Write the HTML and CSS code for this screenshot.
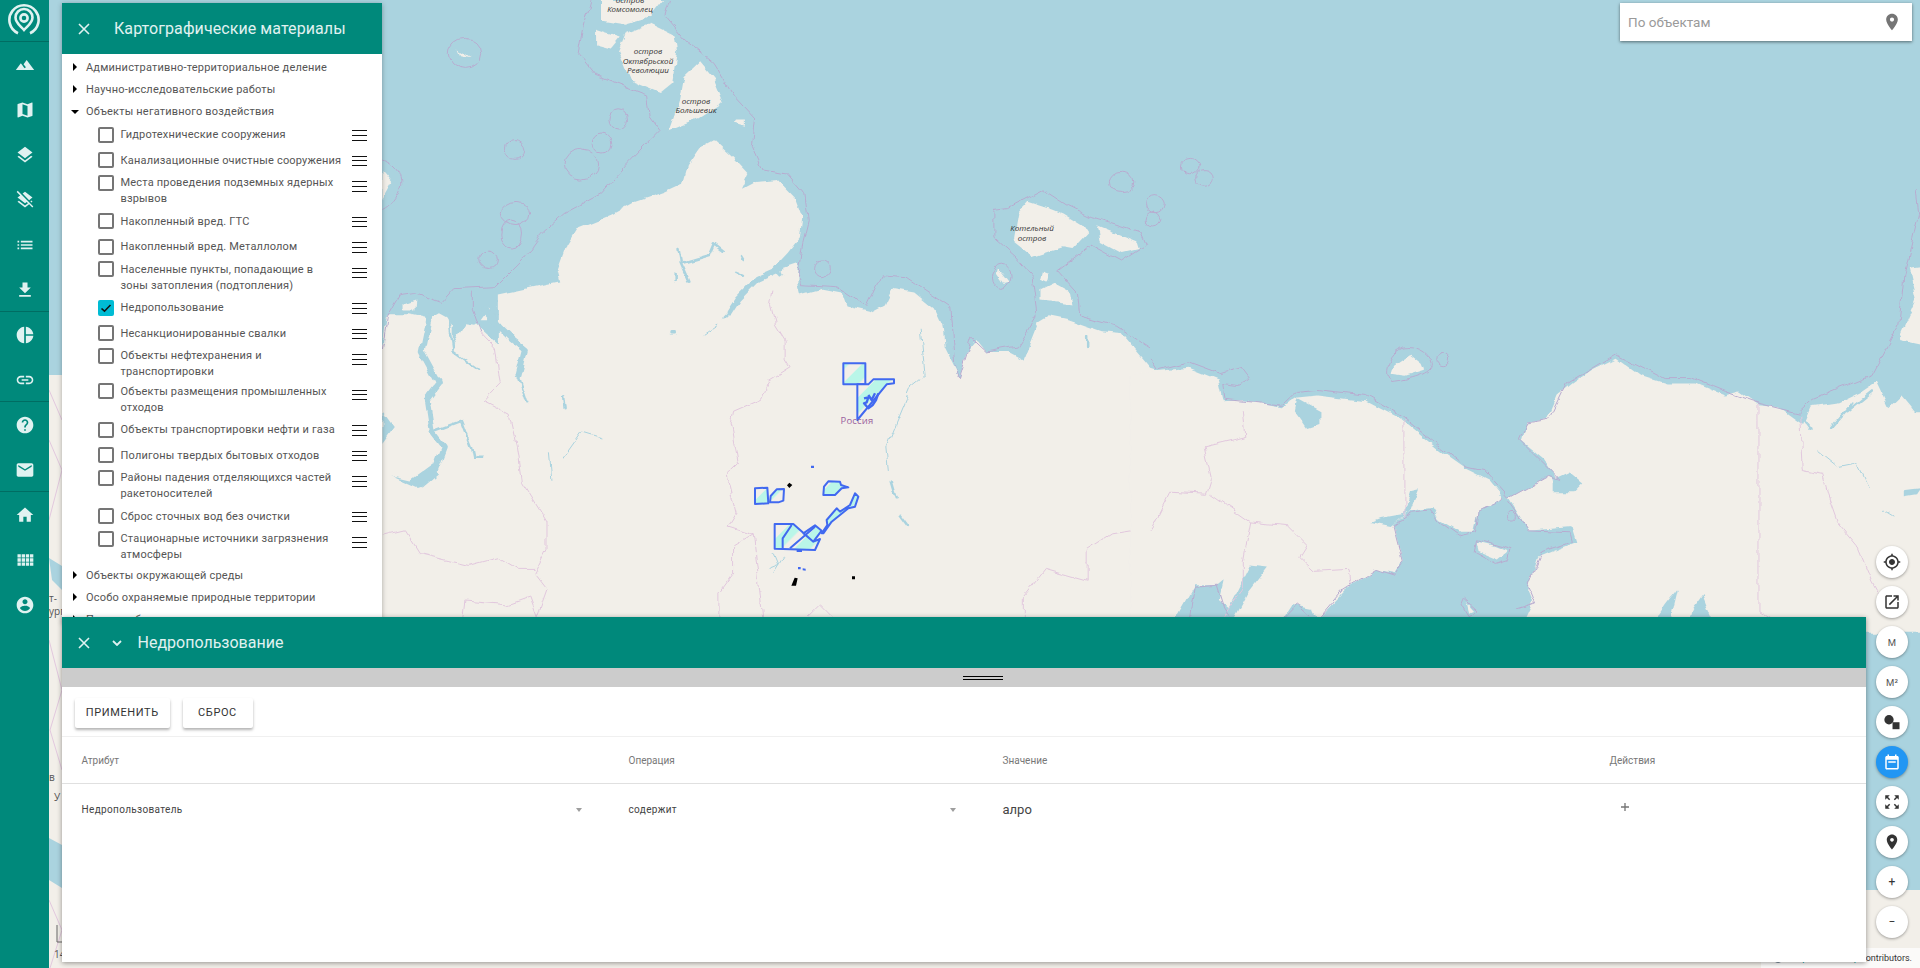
FILE: index.html
```html
<!DOCTYPE html>
<html lang="ru">
<head>
<meta charset="utf-8">
<title>Картографические материалы</title>
<link rel="stylesheet" href="styles.css">
</head>
<body>
<div class="app">
  <svg class="map" width="1920" height="968" viewBox="0 0 1920 968" xmlns="http://www.w3.org/2000/svg">
    <defs>
      <pattern id="zone" patternUnits="userSpaceOnUse" width="62" height="62" patternTransform="rotate(-45)">
        <rect width="62" height="62" fill="#f2efe9"/>
        <rect width="62" height="34" fill="#b9f6e8"/>
      </pattern>
      <filter id="rough" filterUnits="userSpaceOnUse" x="-60" y="-60" width="1720" height="1720">
        <feTurbulence type="fractalNoise" baseFrequency="0.028" numOctaves="3" seed="4" result="n"/>
        <feDisplacementMap in="SourceGraphic" in2="n" scale="16" xChannelSelector="R" yChannelSelector="G"/>
      </filter>
    </defs>
    <rect class="water" x="0" y="0" width="1920" height="968"/>
    <rect class="land" x="40" y="375" width="345" height="593"/>
    <path class="gulf" d="M49 558 L62 566 L62 590 L52 580 Z"/>
    <path class="gulf" d="M49 838 L62 845 L62 888 L49 880 Z"/>
    <rect class="land" x="0" y="890" width="1920" height="78"/>
    <path class="admin" d="M49 390 L62 420 M49 440 L62 470 L49 520 M49 640 L62 690 L50 730 L62 770 M49 900 L62 930 L50 968"/>
    <g class="rough" transform="translate(380 0) scale(0.4911 0.3954)">
      <path class="land" d="M0 1568 L0 900 L12 800 L20 795 L60 795 L98 805 L120 790 L135 800 L150 825 L150 870 L175 820 L200 825 L240 870 L240 745 L340 718 L365 712 L360 690 L380 620 L400 580 L470 545 L520 510 L580 485 L615 465 L625 420 L650 375 L680 355 L720 400 L750 440 L735 480 L765 460 L810 455 L845 500 L860 550 L855 600 L830 640 L800 680 L815 700 L850 670 L850 720 L855 745 L900 730 L940 740 L950 775 L1000 790 L1030 770 L1045 730 L1090 740 L1130 780 L1145 820 L1150 880 L1170 930 L1180 955 L1195 890 L1215 860 L1235 890 L1280 890 L1310 910 L1340 815 L1360 800 L1400 810 L1470 840 L1510 845 L1568 930 L1610 945 L1610 1568 Z"/>
      <path class="land" d="M450 0 L580 0 L555 40 L500 60 L450 50 Z"/>
      <path class="land" d="M440 75 L490 95 L470 125 L440 115 Z"/>
      <path class="land" d="M500 85 L550 60 L600 90 L605 130 L595 210 L570 235 L510 205 L485 130 Z"/>
      <path class="land" d="M650 155 L680 200 L700 260 L650 300 L590 330 L610 260 L620 190 Z"/>
      <path class="land" d="M725 305 L745 305 L745 318 L722 310 Z"/>
      <path class="land" d="M160 125 L185 145 L165 140 Z"/>
      <path class="land" d="M5 430 L25 460 L5 505 Z"/>
      <path class="land" d="M1320 510 L1370 530 L1390 540 L1430 570 L1440 590 L1410 630 L1390 625 L1330 650 L1290 610 L1300 540 Z"/>
      <path class="land" d="M1460 570 L1540 610 L1545 630 L1510 640 L1465 610 Z"/>
      <path class="land" d="M1345 730 L1370 715 L1405 740 L1410 770 L1345 760 Z"/>
      <path class="land" d="M1350 685 L1362 690 L1358 712 L1346 705 Z"/>
      <path class="land" d="M1258 680 L1280 715 L1272 718 L1256 690 Z"/>
      <path class="land" d="M48 770 L72 760 L70 785 L48 785 Z"/>
      <path class="land" d="M205 810 L222 780 L220 810 Z"/>
      <path class="land" d="M172 845 L198 820 L200 840 Z"/>
      <path class="land" d="M815 680 L850 665 L848 700 L820 695 Z"/>
      <path class="river thick" d="M100 800 L85 890 L120 970 L95 1010 L105 1090 L130 1130 L110 1195 L80 1230"/>
      <path class="river mid" d="M110 1090 L165 1065 L185 1130 L190 1160 L210 1160"/>
      <path class="river mid" d="M140 800 L150 890 L200 935"/>
      <path class="river thick" d="M210 780 L245 830 L270 860 L295 885 L282 950"/>
      <path class="river mid" d="M282 950 L300 1020"/>
      <path class="gulf" d="M5 1040 L28 1080 L5 1120 Z"/>
      <path class="gulf" d="M25 1205 L60 1215 L110 1170 L120 1200 L85 1238 Z"/>
      <path class="river mid" d="M610 630 L615 665 L670 645 L680 615 L700 635"/>
      <path class="river mid" d="M612 665 L630 715"/>
      <path class="river mid" d="M600 690 L600 708"/>
      <path class="river mid" d="M735 650 L740 660"/>
      <path class="river mid" d="M725 690 L735 695"/>
      <path class="river thick" d="M815 680 L770 705 L730 755 L712 790"/>
      <path class="river mid" d="M712 790 L700 805"/>
      <path class="river mid" d="M592 843 L600 843"/>
      <path class="river mid" d="M375 1002 L378 1035"/>
      <path class="river fine" d="M345 1150 L350 1215 M370 1160 L410 1090 L450 1105 M660 845 L690 820"/>
      <path class="river fine" d="M1100 830 L1110 950 L1080 980 L1050 1070 L1030 1130 L1035 1190"/>
      <path class="river mid" d="M1040 1218 L1050 1260"/>
      <path class="river mid" d="M1058 1302 L1075 1330"/>
      <path class="river fine" d="M800 1400 L810 1430 L790 1440 M820 1410 L800 1450"/>
      <path class="river mid" d="M1440 850 L1440 880"/>
      <path class="admin" d="M800 735 L795 770 L805 820 L825 860 L825 910 L835 930 L790 965 L775 1010 L720 1040 L715 1070 L730 1170 L705 1200 L725 1300 L710 1330 L760 1350 L720 1380 L720 1450 L690 1500 L690 1560"/>
      <path class="admin" d="M205 840 L235 880 L245 970 L210 1015 L265 1050 L280 1130 L290 1220 L340 1320 L340 1390 L315 1450 L340 1490 L320 1560"/>
      <path class="admin" d="M0 1355 L50 1340 L80 1400 L180 1430 L240 1410 L280 1440 L315 1440"/>
      <path class="admin" d="M170 1568 L175 1520 L260 1530 L305 1510 L320 1560"/>
      <path class="admin" d="M760 1350 L780 1568 M870 1560 L895 1530 L925 1568"/>
      <path class="admin" d="M1568 1335 L1490 1350 L1440 1390 L1440 1470 L1355 1440 L1310 1510 L1310 1568"/>
      <path class="sea" d="M430 0 L415 70 L405 135 L440 190 L545 240 L550 295 L570 330 L500 420 L450 490 L375 540 L330 590 L295 650 L235 725 L150 730 L125 765 L70 740 L40 745 L15 800 L5 880"/>
      <path class="sea" d="M590 0 L580 40 L620 100 L680 160 L720 240 L765 300 L758 370 L780 430 L830 440 L865 490 L872 560 L860 620 L850 700 L860 720 L930 725 L990 775 L1020 695 L1070 700 L1160 775 L1170 920 L1180 955 L1205 855 L1235 890 L1300 875 L1340 795 L1330 700 L1295 650 L1250 600 L1250 530 L1280 525 L1350 480 L1400 520 L1450 550 L1550 590 L1560 620 L1510 660 L1450 620 L1380 685 L1420 740 L1425 800 L1500 825 L1568 880"/>
      <path class="sea" d="M188 735 L188 780 L205 840"/>
      <path class="sea" d="M5 405 C30 415 45 440 42 470 C38 500 20 520 5 530"/>
      <ellipse class="sea" cx="172" cy="135" rx="33" ry="38"/>
      <ellipse class="sea" cx="275" cy="378" rx="20" ry="25"/>
      <ellipse class="sea" cx="485" cy="302" rx="19" ry="27"/>
      <ellipse class="sea" cx="452" cy="363" rx="18" ry="24"/>
      <ellipse class="sea" cx="410" cy="415" rx="33" ry="38"/>
      <ellipse class="sea" cx="275" cy="540" rx="30" ry="28"/>
      <ellipse class="sea" cx="267" cy="592" rx="21" ry="38"/>
      <ellipse class="sea" cx="220" cy="657" rx="17" ry="22"/>
      <ellipse class="sea" cx="900" cy="680" rx="15" ry="20"/>
      <ellipse class="sea" cx="1510" cy="460" rx="25" ry="27"/>
      <ellipse class="sea" cx="1265" cy="700" rx="18" ry="32"/>
    </g>
    <g class="rough" transform="translate(1150 0) scale(0.4911 0.3954)">
      <path class="land" d="M-40 950 L0 940 L80 930 L140 960 L150 1015 L190 1012 L270 1030 L300 1005 L340 1000 L440 1015 L510 1060 L600 1150 L640 1185 L690 1215 L720 1260 L705 1268 L670 1290 L660 1345 L630 1345 L590 1315 L575 1285 L530 1292 L495 1325 L515 1420 L500 1450 L460 1440 L400 1490 L340 1568 L-40 1568 Z"/>
      <path class="land" d="M730 1260 L810 1205 L835 1225 L800 1160 L755 1115 L765 1070 L810 1060 L830 1000 L860 970 L900 935 L950 905 L1000 950 L1050 970 L1110 970 L1170 1000 L1200 990 L1240 1025 L1280 1030 L1330 1075 L1345 1030 L1400 1020 L1450 990 L1480 965 L1505 1030 L1530 1000 L1560 1045 L1600 1045 L1600 1600 L750 1600 L780 1520 L770 1490 L790 1410 L830 1390 L870 1370 L860 1330 L770 1340 L750 1300 Z"/>
      <path class="land" d="M1545 680 L1600 670 L1600 880 L1525 860 L1560 760 Z"/>
      <path class="land" d="M495 925 L530 895 L555 920 L560 935 L520 950 L490 945 Z"/>
      <path class="land" d="M665 1370 L700 1380 L730 1395 L710 1415 L670 1395 Z"/>
      <path class="land" d="M645 1525 L660 1545 L650 1550 Z"/>
      <path class="gulf" d="M300 1010 L345 1040 L345 1075 L320 1085 L295 1040 Z"/>
      <path class="gulf" d="M530 1240 L548 1235 L530 1290 L490 1330 L450 1320 L470 1310 L515 1300 Z"/>
      <path class="gulf" d="M90 1480 L135 1480 L150 1465 L140 1520 L160 1540 L205 1430 L240 1435 L200 1500 L170 1568 L50 1568 Z"/>
      <path class="gulf" d="M270 1568 L290 1530 L330 1540 L340 1568 Z"/>
      <path class="gulf" d="M820 1215 L855 1195 L880 1220 L860 1245 L820 1245 Z"/>
      <path class="gulf" d="M1050 1530 L1075 1490 L1060 1568 L1030 1568 Z"/>
      <path class="gulf" d="M1105 1540 L1125 1505 L1145 1568 L1100 1568 Z"/>
      <path class="gulf" d="M1535 1240 L1568 1235 L1560 1250 L1535 1255 Z"/>
      <path class="river mid" d="M1330 1060 L1345 1085 M1385 1085 L1430 1020 M1420 1040 L1470 990"/>
      <path class="river fine" d="M1360 1140 L1400 1180 L1440 1170 L1465 1235 M1495 1290 L1515 1305"/>
      <path class="admin" d="M517 1060 L517 1310"/>
      <path class="admin" d="M1240 1020 L1240 1545 L1270 1568"/>
      <path class="admin" d="M1325 1050 L1330 1190 L1370 1200 L1380 1250 L1400 1320 L1440 1380 L1470 1470 L1510 1560"/>
      <path class="admin" d="M190 1040 L195 1105 L110 1130 L125 1210 L115 1250 L40 1245 L10 1320 L0 1340"/>
      <path class="admin" d="M125 1250 L205 1320 L280 1330 L320 1380 L305 1410 L335 1445 L405 1440 L410 1480"/>
      <path class="admin" d="M205 1320 L190 1420 L190 1490 L150 1560"/>
      <path class="sea" d="M0 905 L15 935 L80 915 L145 945 L185 930 L203 960 L180 975 L150 970 L155 1010 L270 1025 L300 990 L340 985 L440 1000 L510 1050 L640 1180 L680 1190 L730 1260 L810 1205 L835 1215 L750 1110 L765 1070 L815 1060 L850 970 L950 895 L1045 955 L1100 955 L1170 990 L1240 1020 L1320 1045 L1350 1010 L1470 950 L1525 820 L1535 700 L1565 540 L1560 480"/>
      <path class="sea" d="M720 1260 L670 1290 L665 1345 L630 1355 L590 1320 L570 1290 L535 1295 L495 1330 L515 1425 L500 1455 L460 1440 L390 1495 L340 1568"/>
      <path class="sea" d="M730 1270 L770 1340 L855 1345 L860 1370 L800 1395 L770 1480 L785 1525 L745 1540"/>
      <path class="sea" d="M80 1568 L90 1485 L135 1480 L150 1540 L165 1568 M270 1568 L300 1530 L335 1568"/>
      <path class="sea" d="M515 880 C495 890 480 915 482 945 L490 965 C530 960 575 945 575 920 C570 890 540 875 515 880 Z"/>
      <path class="sea" d="M665 1365 L735 1390 L730 1415 L705 1425 L660 1395 Z"/>
      <path class="sea" d="M640 1515 L668 1545 L650 1560 L635 1530 Z"/>
      <ellipse class="sea" cx="82" cy="420" rx="18" ry="22"/>
      <ellipse class="sea" cx="110" cy="450" rx="17" ry="21"/>
      <ellipse class="sea" cx="10" cy="515" rx="19" ry="23"/>
      <ellipse class="sea" cx="5" cy="555" rx="15" ry="19"/>
      <ellipse class="sea" cx="597" cy="908" rx="13" ry="17"/>
      <ellipse class="sea" cx="737" cy="1307" rx="9" ry="11"/>
    </g>
    <g transform="translate(740 340) scale(0.33333)">
      <path class="zone" d="M310 70 L376 70 L376 133 L310 133 Z"/>
      <path class="zone" d="M352 133 L352 240 L440 133 L462 130 L462 118 L400 118 L385 133 Z"/>
      <path class="zone-line" d="M372 175 L385 172 L380 187 L372 190 L385 205 L398 195 L408 180 L415 160 M385 165 L395 180 L405 160"/>
      <path class="zone" d="M45 445 L82 443 L85 490 L45 492 Z"/>
      <path class="zone" d="M92 468 L110 448 L132 447 L130 482 L115 487 L90 487 Z"/>
      <path class="zone" d="M250 465 L252 440 L265 424 L300 425 L303 435 L325 442 L305 445 L285 465 Z"/>
      <path class="zone" d="M245 580 L262 555 L260 540 L290 505 L300 515 L330 495 L345 460 L355 470 L345 500 L325 505 L275 545 L250 580 Z"/>
      <path class="zone" d="M104 552 L160 552 L220 605 L190 580 L225 556 L245 572 L220 605 L240 597 L225 630 L104 626 Z"/>
      <path class="zone-line thin" d="M155 555 L128 595 L128 625 M150 625 L225 560"/>
      <path class="dot" d="M213 377 H222 V384 H213 Z M174 681 L182 681 L182 688 L174 688 Z M188 685 L197 686 L197 692 L188 691 Z M170 628 H186 V636 H170 Z"/>
      <path class="blot" d="M148 428 L157 435 L148 444 L141 436 Z M164 713 L173 715 L168 737 L154 737 Z M336 709 H345 V718 H336 Z"/>
    </g>
    <text class="label-ru" x="857" y="424" text-anchor="middle">Россия</text>
    <text class="label-isle" x="630" y="3" text-anchor="middle">остров</text>
    <text class="label-isle" x="630" y="12" text-anchor="middle">Комсомолец</text>
    <text class="label-isle" x="648" y="54" text-anchor="middle">остров</text>
    <text class="label-isle" x="648" y="64" text-anchor="middle">Октябрьской</text>
    <text class="label-isle" x="648" y="73" text-anchor="middle">Революции</text>
    <text class="label-isle" x="696" y="104" text-anchor="middle">остров</text>
    <text class="label-isle" x="696" y="113" text-anchor="middle">Большевик</text>
    <text class="label-isle" x="1032" y="231" text-anchor="middle">Котельный</text>
    <text class="label-isle" x="1032" y="241" text-anchor="middle">остров</text>
    <text class="label-city" x="49" y="602">т-</text>
    <text class="label-city" x="49" y="615">ург</text>
    <text class="label-city" x="49" y="781">в</text>
    <text class="label-city" x="54" y="801">У</text>
    <text class="label-city" x="54" y="958">14</text>
    <path class="scale" d="M57 925 V942 H62"/>
  </svg>

  <div class="attrib"><i class="globe"></i><span>© <a class="osm">OpenStreetMap</a> contributors.</span></div>

  <div class="layout">
    <nav class="rail">
      <div class="rail-logo">
        <svg class="logo" viewBox="0 0 32 32" width="32" height="32">
          <path d="M10 30.2 A14.6 14.6 0 1 1 22 30.2" class="logo-line"/>
          <path d="M16 27 C12.5 23 7.5 20 7.5 14.5 A8.5 8.5 0 0 1 24.5 14.5 C24.5 20 19.5 23 16 27 Z" class="logo-line"/>
          <circle cx="16" cy="15" r="3.6" class="logo-line"/>
        </svg>
      </div>
      <div class="rail-group">
        <span class="rail-btn"><svg viewBox="0 0 24 24"><path d="M14 6l-3.75 5 2.85 3.8-1.6 1.2C9.81 13.75 7 10 7 10l-6 8h22L14 6z"/></svg></span>
        <span class="rail-btn"><svg viewBox="0 0 24 24"><path d="M20.5 3l-.16.03L15 5.1 9 3 3.36 4.9c-.21.07-.36.25-.36.48V20.5c0 .28.22.5.5.5l.16-.03L9 18.9l6 2.1 5.64-1.9c.21-.07.36-.25.36-.48V3.5c0-.28-.22-.5-.5-.5zM15 19l-6-2.11V5l6 2.11V19z"/></svg></span>
        <span class="rail-btn"><svg viewBox="0 0 24 24"><path d="M11.99 18.54l-7.37-5.73L3 14.07l9 7 9-7-1.63-1.27-7.38 5.74zM12 16l7.36-5.73L21 9l-9-7-9 7 1.63 1.27L12 16z"/></svg></span>
        <span class="rail-btn"><svg viewBox="0 0 24 24"><path d="M19.81 14.99l1.19-.92-1.43-1.43-1.19.92 1.43 1.43zm-.45-4.72L21 9l-9-7-2.91 2.27 7.87 7.88 2.4-1.88zM3.27 1L2 2.27l4.22 4.22L3 9l1.63 1.27L12 16l2.1-1.63 1.43 1.43L12 18.54l-7.37-5.73L3 14.07l9 7 4.95-3.85L20.73 21 22 19.73 3.27 1z"/></svg></span>
        <span class="rail-btn"><svg viewBox="0 0 24 24"><path d="M3 13h2v-2H3v2zm0 4h2v-2H3v2zm0-8h2V7H3v2zm4 4h14v-2H7v2zm0 4h14v-2H7v2zM7 7v2h14V7H7z"/></svg></span>
        <span class="rail-btn"><svg viewBox="0 0 24 24"><path d="M19 9h-4V3H9v6H5l7 7 7-7zM5 18v2h14v-2H5z"/></svg></span>
      </div>
      <div class="rail-group">
        <span class="rail-btn"><svg viewBox="0 0 24 24"><path d="M11 2v20c-5.07-.5-9-4.79-9-10s3.93-9.5 9-10zm2.03 0v8.99H22c-.47-4.74-4.24-8.52-8.97-8.99zm0 11.01V22c4.74-.47 8.5-4.25 8.97-8.99h-8.97z"/></svg></span>
        <span class="rail-btn"><svg viewBox="0 0 24 24"><path d="M3.9 12c0-1.71 1.39-3.1 3.1-3.1h4V7H7c-2.76 0-5 2.24-5 5s2.24 5 5 5h4v-1.9H7c-1.71 0-3.1-1.39-3.1-3.1zM8 13h8v-2H8v2zm9-6h-4v1.9h4c1.71 0 3.1 1.39 3.1 3.1s-1.39 3.1-3.1 3.1h-4V17h4c2.76 0 5-2.24 5-5s-2.24-5-5-5z"/></svg></span>
      </div>
      <div class="rail-group">
        <span class="rail-btn"><svg viewBox="0 0 24 24"><path d="M12 2C6.48 2 2 6.48 2 12s4.48 10 10 10 10-4.48 10-10S17.52 2 12 2zm1 17h-2v-2h2v2zm2.07-7.75l-.9.92C13.45 12.9 13 13.5 13 15h-2v-.5c0-1.1.45-2.1 1.17-2.83l1.24-1.26c.37-.36.59-.86.59-1.41 0-1.1-.9-2-2-2s-2 .9-2 2H8c0-2.21 1.79-4 4-4s4 1.79 4 4c0 .88-.36 1.68-.93 2.25z"/></svg></span>
        <span class="rail-btn"><svg viewBox="0 0 24 24"><path d="M20 4H4c-1.1 0-1.99.9-1.99 2L2 18c0 1.1.9 2 2 2h16c1.1 0 2-.9 2-2V6c0-1.1-.9-2-2-2zm0 4l-8 5-8-5V6l8 5 8-5v2z"/></svg></span>
      </div>
      <div class="rail-group rail-last">
        <span class="rail-btn"><svg viewBox="0 0 24 24"><path d="M10 20v-6h4v6h5v-8h3L12 3 2 12h3v8z"/></svg></span>
        <span class="rail-btn"><svg viewBox="0 0 24 24"><path d="M3 9h4V5H3v4zm0 5h4v-4H3v4zm5 0h4v-4H8v4zm5 0h4v-4h-4v4zM8 9h4V5H8v4zm5-4v4h4V5h-4zm5 9h4v-4h-4v4zM3 19h4v-4H3v4zm5 0h4v-4H8v4zm5 0h4v-4h-4v4zm5 0h4v-4h-4v4zm0-14v4h4V5h-4z"/></svg></span>
        <span class="rail-btn"><svg viewBox="0 0 24 24"><path d="M12 2C6.48 2 2 6.48 2 12s4.48 10 10 10 10-4.48 10-10S17.52 2 12 2zm0 3c1.66 0 3 1.34 3 3s-1.34 3-3 3-3-1.34-3-3 1.34-3 3-3zm0 14.2c-2.5 0-4.71-1.28-6-3.22.03-1.99 4-3.08 6-3.08 1.99 0 5.97 1.09 6 3.08-1.29 1.94-3.5 3.22-6 3.22z"/></svg></span>
      </div>
    </nav>
  </div>

  <section class="layers">
    <header class="panel-head">
      <svg class="icon-close" viewBox="0 0 12 12"><path d="M1 1 L11 11 M11 1 L1 11"/></svg>
      <h1 class="panel-title layers-title">Картографические материалы</h1>
    </header>
    <div class="tree">
      <div class="group"><i class="tri"></i>Административно-территориальное деление</div>
      <div class="group"><i class="tri"></i>Научно-исследовательские работы</div>
      <div class="group"><i class="tri open"></i>Объекты негативного воздействия</div>
      <div class="item"><i class="box"></i><span class="name">Гидротехнические сооружения</span><i class="burger"></i></div>
      <div class="item"><i class="box"></i><span class="name">Канализационные очистные сооружения</span><i class="burger"></i></div>
      <div class="item two"><i class="box"></i><span class="name">Места проведения подземных ядерных<br>взрывов</span><i class="burger"></i></div>
      <div class="item"><i class="box"></i><span class="name">Накопленный вред. ГТС</span><i class="burger"></i></div>
      <div class="item"><i class="box"></i><span class="name">Накопленный вред. Металлолом</span><i class="burger"></i></div>
      <div class="item two"><i class="box"></i><span class="name">Населенные пункты, попадающие в<br>зоны затопления (подтопления)</span><i class="burger"></i></div>
      <div class="item"><i class="box on"><svg viewBox="0 0 16 16"><path d="M3.5 8.5 L6.5 11.2 L12.5 5"/></svg></i><span class="name">Недропользование</span><i class="burger"></i></div>
      <div class="item"><i class="box"></i><span class="name">Несанкционированные свалки</span><i class="burger"></i></div>
      <div class="item two"><i class="box"></i><span class="name">Объекты нефтехранения и<br>транспортировки</span><i class="burger"></i></div>
      <div class="item two"><i class="box"></i><span class="name">Объекты размещения промышленных<br>отходов</span><i class="burger"></i></div>
      <div class="item"><i class="box"></i><span class="name">Объекты транспортировки нефти и газа</span><i class="burger"></i></div>
      <div class="item"><i class="box"></i><span class="name">Полигоны твердых бытовых отходов</span><i class="burger"></i></div>
      <div class="item two"><i class="box"></i><span class="name">Районы падения отделяющихся частей<br>ракетоносителей</span><i class="burger"></i></div>
      <div class="item"><i class="box"></i><span class="name">Сброс сточных вод без очистки</span><i class="burger"></i></div>
      <div class="item two"><i class="box"></i><span class="name">Стационарные источники загрязнения<br>атмосферы</span><i class="burger"></i></div>
      <div class="group"><i class="tri"></i>Объекты окружающей среды</div>
      <div class="group"><i class="tri"></i>Особо охраняемые природные территории</div>
      <div class="group"><i class="tri"></i>Прочие объекты</div>
    </div>
  </section>

  <section class="filter">
    <header class="panel-head filter-head">
      <svg class="icon-close" viewBox="0 0 12 12"><path d="M1 1 L11 11 M11 1 L1 11"/></svg>
      <svg class="icon-chev" viewBox="0 0 10 6"><path d="M1 1 L5 5 L9 1"/></svg>
      <h2 class="panel-title filter-title">Недропользование</h2>
    </header>
    <div class="splitter"><i class="grip"></i></div>
    <div class="actions">
      <button class="btn btn-apply">ПРИМЕНИТЬ</button>
      <button class="btn btn-reset">СБРОС</button>
    </div>
    <div class="grid grid-head">
      <div>Атрибут</div>
      <div>Операция</div>
      <div>Значение</div>
      <div>Действия</div>
    </div>
    <div class="grid grid-row">
      <div class="select"><span>Недропользователь</span><i class="caret"></i></div>
      <div class="select"><span>содержит</span><i class="caret"></i></div>
      <div class="value">алро</div>
      <div class="plus-cell"><svg class="plus" viewBox="0 0 10 10"><path d="M5 1 V9 M1 5 H9"/></svg></div>
    </div>
  </section>

  <div class="search">
    <span class="search-text">По объектам</span>
    <svg class="search-pin" viewBox="0 0 24 24"><path d="M12 2C8.13 2 5 5.13 5 9c0 5.25 7 13 7 13s7-7.75 7-13c0-3.87-3.13-7-7-7zm0 9.5c-1.38 0-2.5-1.12-2.5-2.5s1.12-2.5 2.5-2.5 2.5 1.12 2.5 2.5-1.12 2.5-2.5 2.5z"/></svg>
  </div>

  <div class="tools">
    <span class="tool"><svg viewBox="0 0 24 24"><path d="M12 8c-2.21 0-4 1.79-4 4s1.79 4 4 4 4-1.79 4-4-1.79-4-4-4zm8.94 3c-.46-4.17-3.77-7.48-7.94-7.94V1h-2v2.06C6.83 3.52 3.52 6.83 3.06 11H1v2h2.06c.46 4.17 3.77 7.48 7.94 7.94V23h2v-2.06c4.17-.46 7.48-3.77 7.94-7.94H23v-2h-2.06zM12 19c-3.87 0-7-3.13-7-7s3.13-7 7-7 7 3.13 7 7-3.13 7-7 7z"/></svg></span>
    <span class="tool"><svg viewBox="0 0 24 24"><path d="M19 19H5V5h7V3H5c-1.11 0-2 .9-2 2v14c0 1.1.89 2 2 2h14c1.1 0 2-.9 2-2v-7h-2v7zM14 3v2h3.59l-9.83 9.83 1.41 1.41L19 6.41V10h2V3h-7z"/></svg></span>
    <span class="tool tool-text">м</span>
    <span class="tool tool-text">м²</span>
    <span class="tool"><svg viewBox="0 0 24 24"><circle cx="8" cy="9" r="6.2"/><rect x="12.7" y="12.3" width="9.3" height="9.3"/></svg></span>
    <span class="tool tool-on"><svg viewBox="0 0 24 24"><path d="M19 4h-1V2h-2v2H8V2H6v2H5c-1.1 0-2 .9-2 2v14c0 1.1.9 2 2 2h14c1.1 0 2-.9 2-2V6c0-1.1-.9-2-2-2zm0 16H5V9h14v11zM7 11h10v2H7z"/></svg></span>
    <span class="tool"><svg viewBox="0 0 24 24"><path d="M15 3l2.3 2.3-2.89 2.87 1.42 1.42L18.7 6.7 21 9V3zM3 9l2.3-2.3 2.87 2.89 1.42-1.42L6.7 5.3 9 3H3zm6 12l-2.3-2.3 2.89-2.87-1.42-1.42L5.3 17.3 3 15v6zm12-6l-2.3 2.3-2.87-2.89-1.42 1.42 2.89 2.87L15 21h6z"/></svg></span>
    <span class="tool"><svg viewBox="0 0 24 24"><path d="M12 2C8.13 2 5 5.13 5 9c0 5.25 7 13 7 13s7-7.75 7-13c0-3.87-3.13-7-7-7zm0 9.5c-1.38 0-2.5-1.12-2.5-2.5s1.12-2.5 2.5-2.5 2.5 1.12 2.5 2.5-1.12 2.5-2.5 2.5z"/></svg></span>
    <span class="tool tool-text tool-zoom">+</span>
    <span class="tool tool-text tool-zoom">−</span>
  </div>
</div>
</body>
</html>
```
FILE: styles.css
```css
* { box-sizing: border-box; }
html, body { margin: 0; padding: 0; height: 100%; }
body { font-family: Roboto, "Noto Sans", sans-serif; overflow: hidden; background: #aad3df; }
.app { position: relative; width: 1920px; height: 968px; overflow: hidden; }

/* map */
.map { position: absolute; left: 0; top: 0; display: block; }
.rough { filter: url(#rough); }
.water { fill: #aad3df; }
.land { fill: #f2efe9; }
.gulf { fill: #aad3df; }
.river { fill: none; stroke: #aad3df; stroke-linejoin: round; stroke-linecap: round; vector-effect: non-scaling-stroke; }
.river.thick { stroke-width: 6px; }
.river.mid { stroke-width: 2.5px; }
.river.fine { stroke-width: 1px; }
.admin { fill: none; stroke: #e2c8de; stroke-width: 1px; vector-effect: non-scaling-stroke; }
.sea { fill: none; stroke: #b8acd0; stroke-width: 1px; vector-effect: non-scaling-stroke; }
.zone { fill: url(#zone); stroke: #4169f0; stroke-width: 6; stroke-linejoin: round; }
.zone-line { fill: none; stroke: #4169f0; stroke-width: 7; stroke-linejoin: round; }
.zone-line.thin { stroke-width: 6; }
.dot { fill: #4169f0; }
.blot { fill: #000; }
.label-ru { font: 9.5px "Open Sans", "Noto Sans", sans-serif; fill: #9b5f9e; letter-spacing: 0.2px; }
.label-isle { font: italic 8px "Open Sans", "Noto Sans", sans-serif; fill: #333; }
.label-city { font: 10px "Open Sans", "Noto Sans", sans-serif; fill: #555; }
.scale { fill: none; stroke: #666; stroke-width: 1px; }

/* left rail */
.layout { position: relative; display: flex; height: 968px; width: 49px; }
.rail { width: 49px; height: 100%; background: #00897b; display: flex; flex-direction: column; }
.rail-logo { height: 42px; padding: 3px 0 0 8px; border-bottom: 1px solid rgba(0,0,0,.2); flex: none; }
.logo { display: block; }
.logo-line { fill: none; stroke: #e0f2f1; stroke-width: 2.6; }
.rail-group { position: relative; display: flex; flex-direction: column; flex: none; }
.rail-group::after { content: ""; position: absolute; left: 0; right: 0; bottom: 0; height: 1px; background: rgba(0,0,0,.2); }
.rail-last::after { display: none; }
.rail-btn { height: 45px; display: flex; align-items: center; justify-content: center; }
.rail-btn svg { width: 20px; height: 20px; fill: #e0f2f1; }

/* shared panel head */
.panel-head { height: 51px; background: #00897b; display: flex; align-items: center; flex: none; }
.panel-title { margin: 0; font-weight: 400; font-size: 16px; color: #e0f2f1; white-space: nowrap; }
.icon-close { width: 12px; height: 12px; margin-left: 16px; flex: none; }
.icon-close path { fill: none; stroke: #e0f2f1; stroke-width: 1.6; }

/* layers panel */
.layers { position: absolute; left: 62px; top: 3px; width: 320px; height: 620px; background: #fff; box-shadow: 0 1px 5px rgba(0,0,0,.3); overflow: hidden; display: flex; flex-direction: column; }
.layers-title { margin-left: 24px; letter-spacing: 0.08px; }
.tree { padding-top: 2px; font-size: 11px; letter-spacing: 0.19px; color: #555; }
.group { height: 22px; display: flex; align-items: center; padding-left: 10px; white-space: nowrap; }
.tri { width: 0; height: 0; margin-right: 9px; margin-left: 1px; margin-top: -1px; border-left: 4px solid #000; border-top: 4px solid transparent; border-bottom: 4px solid transparent; flex: none; }
.tri.open { margin-left: -1px; margin-right: 7px; margin-top: 1px; border-left: 4px solid transparent; border-right: 4px solid transparent; border-top: 4px solid #000; border-bottom: 0; }
.item { position: relative; height: 25.5px; display: flex; align-items: center; padding-left: 36px; padding-right: 30px; line-height: 16px; white-space: nowrap; }
.item.two { height: 35.5px; }
.item.two .box { align-self: flex-start; margin-top: 1.75px; }
.box { width: 16px; height: 16px; border: 2px solid #757575; border-radius: 2px; margin-right: 6.5px; flex: none; background: #fff; }
.box.on { background: #00bcd4; border-color: #00bcd4; }
.box svg { display: block; width: 16px; height: 16px; margin: -2px; }
.box svg path { fill: none; stroke: #111; stroke-width: 1.6; }
.name { flex: 1; margin-top: 1px; }
.burger { position: absolute; left: 290px; top: 8px; width: 15px; height: 10.5px; border-top: 1px solid #111; border-bottom: 1px solid #111; }
.burger::after { content: ""; position: absolute; left: 0; right: 0; top: 3.5px; height: 1px; background: #111; }

/* filter panel */
.filter { position: absolute; left: 62px; top: 617px; width: 1804px; height: 345px; background: #fff; box-shadow: 0 1px 5px rgba(0,0,0,.4); display: flex; flex-direction: column; }
.filter-title { margin-left: 15.5px; }
.icon-chev { width: 10px; height: 6px; margin-left: 22px; flex: none; }
.icon-chev path { fill: none; stroke: #e0f2f1; stroke-width: 1.8; }
.splitter { height: 19px; background: #ccc; display: flex; justify-content: center; align-items: flex-start; padding-top: 8px; flex: none; }
.grip { width: 40px; height: 4px; border-top: 1px solid #000; border-bottom: 1px solid #000; margin-left: 38px; }
.actions { height: 50px; display: flex; align-items: flex-start; padding: 11px 0 0 12.5px; gap: 12.5px; flex: none; border-bottom: 1px solid #f0f0f0; }
.btn { height: 29.5px; padding: 0; background: #fff; border: 0; border-radius: 2px; box-shadow: 0 2px 3px rgba(0,0,0,.3); font: 400 11px Roboto, sans-serif; letter-spacing: 0.6px; color: #333; }
.btn-apply { width: 95.5px; }
.btn-reset { width: 70px; }
.grid { display: grid; grid-template-columns: 547px 374px 607px 1fr; padding-left: 19.5px; align-items: center; }
.grid-head { height: 47px; font-size: 10px; color: #777; border-bottom: 1px solid #e0e0e0; flex: none; }
.grid-row { height: 51px; font-size: 10px; color: #444; letter-spacing: 0.35px; flex: none; }
.select { display: flex; justify-content: space-between; align-items: center; padding-right: 47px; }
.caret { width: 0; height: 0; border-left: 3px solid transparent; border-right: 3px solid transparent; border-top: 4px solid #9e9e9e; flex: none; }
.value { font-size: 13px; color: #444; letter-spacing: 0; }
.plus-cell { padding-left: 10px; display: flex; margin-top: -6px; }
.plus { width: 10px; height: 10px; }
.plus path { fill: none; stroke: #757575; stroke-width: 1.3; }

/* search */
.search { position: absolute; left: 1620px; top: 3px; width: 292px; height: 38px; background: #fff; box-shadow: 0 1px 3px rgba(0,0,0,.5); display: flex; align-items: center; justify-content: space-between; padding: 0 10px 0 8px; }
.search-text { font-size: 13.5px; color: #9a9a9a; }
.search-pin { width: 20px; height: 20px; fill: #757575; }

/* tool buttons */
.tools { position: absolute; left: 1876px; top: 546px; display: flex; flex-direction: column; gap: 8px; }
.tool { width: 32px; height: 32px; border-radius: 50%; background: #fff; box-shadow: 0 1px 3px rgba(0,0,0,.35); display: flex; align-items: center; justify-content: center; }
.tool svg { width: 18px; height: 18px; fill: #333; }
.tool-text { font-size: 9.5px; color: #555; text-transform: uppercase; }
.tool-zoom { color: #333; font-size: 12px; }
.tool-on { background: #2196f3; }
.tool-on svg { fill: #fff; }

/* attribution */
.attrib { position: absolute; left: 1761px; top: 948px; width: 159px; height: 20px; background: rgba(255,255,255,.7); font-size: 9px; color: #333; display: flex; align-items: center; justify-content: flex-end; padding: 0 8px 0 0; gap: 4px; white-space: nowrap; }
.osm { color: #00a0a0; }
.globe { width: 10px; height: 10px; border-radius: 50%; background: #789; flex: none; }
```
